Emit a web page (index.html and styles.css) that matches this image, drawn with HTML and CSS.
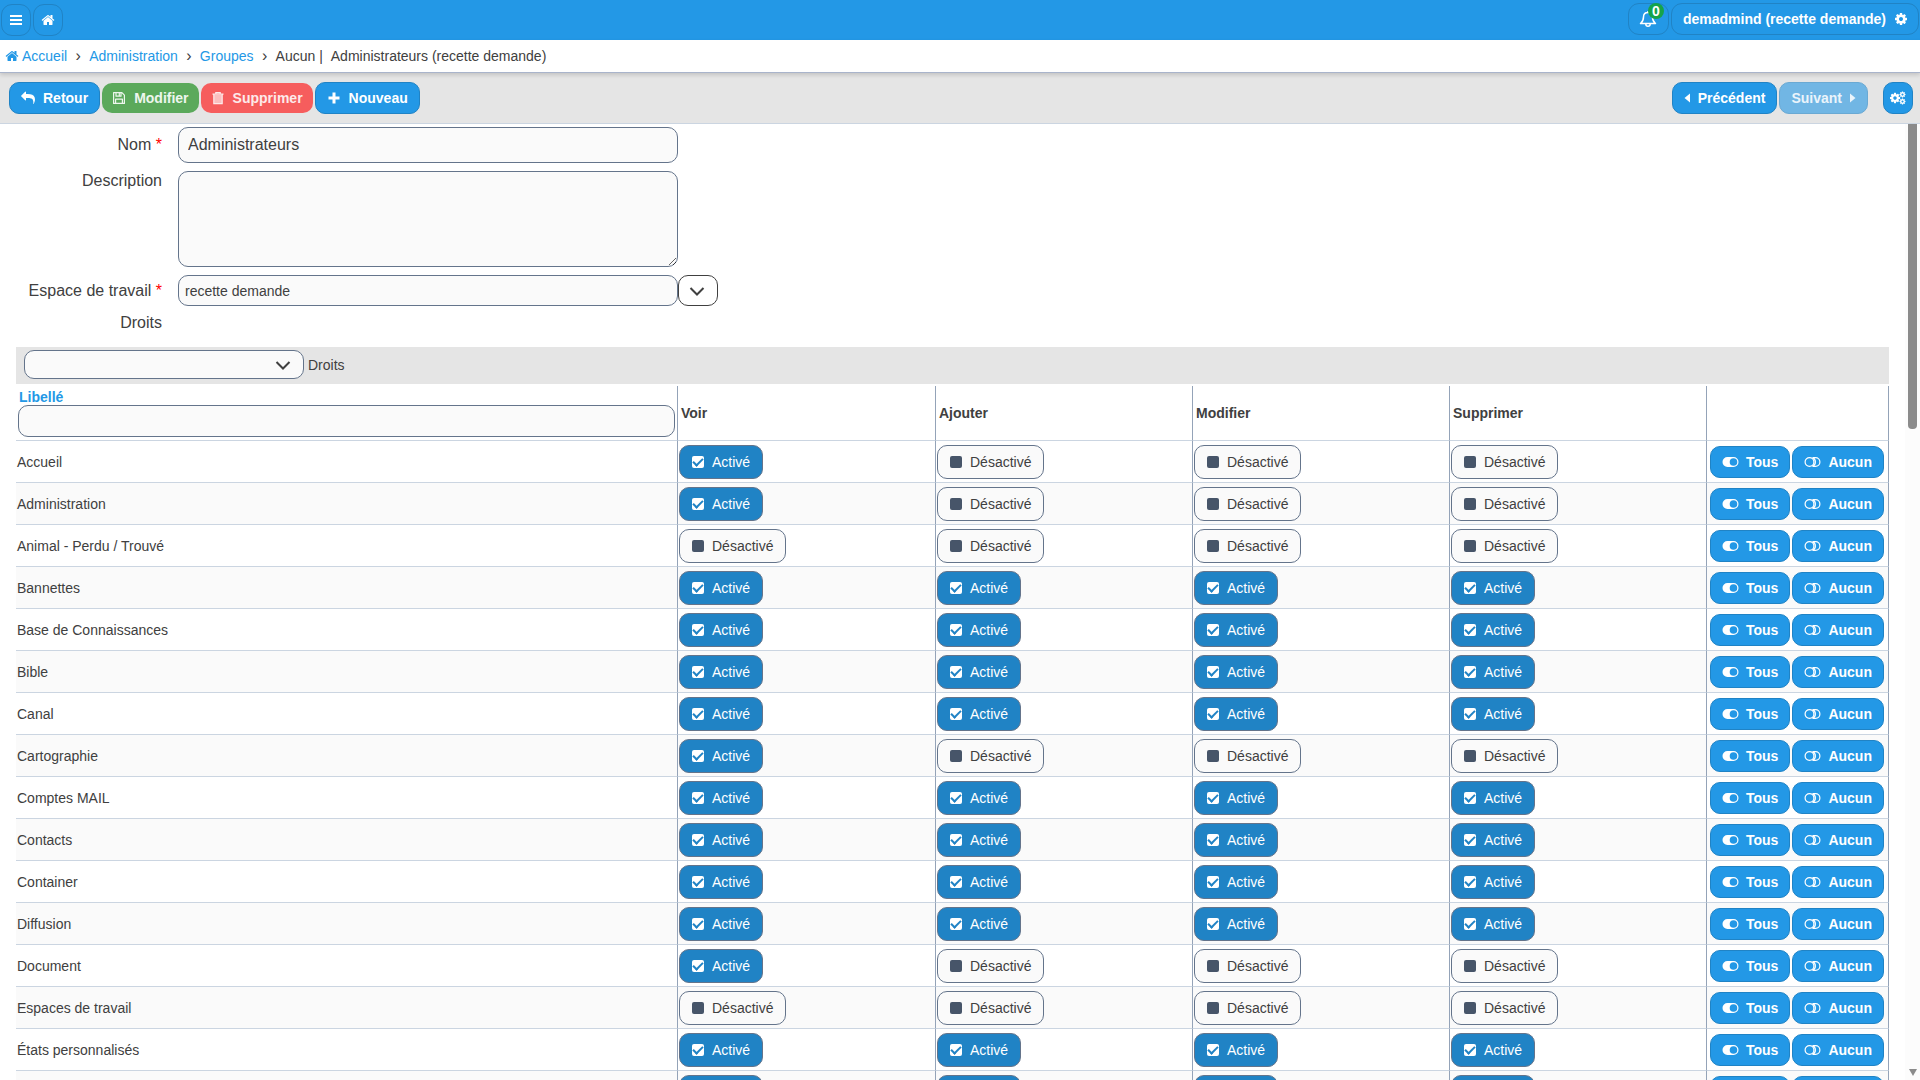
FILE: index.html
```html
<!DOCTYPE html>
<html lang="fr">
<head>
<meta charset="utf-8">
<title>Administrateurs (recette demande)</title>
<link rel="stylesheet" href="styles.css">
</head>
<body>
<svg class="sprite" aria-hidden="true">
  <symbol id="i-home" viewBox="0 0 1792 1792"><path d="M1472 992v480q0 26-19 45t-45 19h-384v-384h-256v384h-384q-26 0-45-19t-19-45v-480q0-1 .5-3t.5-3l575-474 575 474q1 2 1 6zm223-69l-62 74q-8 9-21 11h-3q-13 0-21-7l-692-577-692 577q-12 8-24 7-13-2-21-11l-62-74q-8-10-7-23.500t11-21.500l719-599q32-26 76-26t76 26l244 204v-195q0-14 9-23t23-9h192q14 0 23 9t9 23v408l219 182q10 8 11 21.500t-7 23.500z"/></symbol>
  <symbol id="i-bars" viewBox="0 0 14 14"><path d="M1 2h12v2H1zM1 6h12v2H1zM1 10h12v2H1z"/></symbol>
  <symbol id="i-reply" viewBox="0 0 1792 1792"><path transform="matrix(-1 0 0 1 1792 0)" d="M1792 640q0 26-19 45l-512 512q-19 19-45 19t-45-19-19-45v-256h-224q-98 0-175.500 6t-154 21.500-133 42.500-105.500 69.500-80 101-48.500 138.500-17.500 181q0 55 5 123 0 6 2.500 23.500t2.500 26.500q0 15-8.500 25t-23.500 10q-16 0-28-17-7-9-13-22t-13.500-30-10.500-24q-127-285-127-451 0-199 53-333 162-403 875-403h224v-256q0-26 19-45t45-19 45 19l512 512q19 19 19 45z"/></symbol>
  <symbol id="i-save" viewBox="0 0 14 14"><path fill="none" stroke="currentColor" stroke-width="1.200" stroke-linejoin="round" d="M1.600 1.600h8.300l2.500 2.500v8.300H1.600zM4 1.600v3.600h5V1.600M3.600 12.400V8.200h6.800v4.200M7.300 2v2.600"/></symbol>
  <symbol id="i-trash" viewBox="0 0 14 14"><path d="M3 4h8v8.500H3z" opacity=".7"/><path fill="none" stroke="currentColor" stroke-width="1.200" d="M1.500 3.200h11M4.800 3V1.600h4.400V3M2.800 3.600v9h8.400v-9"/></symbol>
  <symbol id="i-plus" viewBox="0 0 14 14"><path d="M5.500 1.500h3v4h4v3h-4v4h-3v-4h-4v-3h4z"/></symbol>
  <symbol id="i-cog" viewBox="0 0 1792 1792"><path d="M1152 896q0-106-75-181t-181-75-181 75-75 181 75 181 181 75 181-75 75-181zm512-109v222q0 12-8 23t-20 13l-185 28q-19 54-39 91 35 50 107 138 10 12 10 25t-9 23q-27 37-99 108t-94 71q-12 0-26-9l-138-108q-44 23-91 38-16 136-29 186-7 28-36 28h-222q-14 0-24.500-8.500t-11.500-21.500l-28-184q-49-16-90-37l-141 107q-10 9-25 9-14 0-25-11-126-114-165-168-7-10-7-23 0-12 8-23 15-21 51-66.500t54-70.500q-27-50-41-99l-183-27q-13-2-21-12.500t-8-23.500v-222q0-12 8-23t19-13l186-28q14-46 39-92-40-57-107-138-10-12-10-24 0-10 9-23 26-36 98.500-107.500t94.500-71.500q13 0 26 10l138 107q44-23 91-38 16-136 29-186 7-28 36-28h222q14 0 24.500 8.500t11.500 21.500l28 184q49 16 90 37l142-107q9-9 24-9 13 0 25 10 129 119 165 170 7 8 7 22 0 12-8 23-15 21-51 66.500t-54 70.500q26 50 41 98l183 28q13 2 21 12.500t8 23.500z"/></symbol>
  <symbol id="i-cogs" viewBox="0 0 16 14"><use href="#i-cog" x="-1" y="1" width="12" height="12"/><use href="#i-cog" x="9" y="0" width="7" height="7"/><use href="#i-cog" x="9" y="7" width="7" height="7"/></symbol>
  <symbol id="i-bell" viewBox="0 0 18 18"><path fill="none" stroke="currentColor" stroke-width="1.500" stroke-linejoin="round" d="M9 2.500c-3 0-4.500 2-4.500 4.500 0 3.500-1 5-3 6.500h15c-2-1.500-3-3-3-6.500 0-2.500-1.500-4.500-4.500-4.500zM6.800 14c0 1.500 1 2.300 2.200 2.300s2.200-.8 2.200-2.300M9 1v1.500"/></symbol>
  <symbol id="i-left" viewBox="0 0 6 10"><path d="M6 .5v9L.5 5z"/></symbol>
  <symbol id="i-right" viewBox="0 0 6 10"><path d="M0 .5v9L5.500 5z"/></symbol>
  <symbol id="i-chevron" viewBox="0 0 16 16"><path fill="none" stroke="currentColor" stroke-width="2" d="M1.500 5L8 11.500 14.500 5"/></symbol>
  <symbol id="i-on" viewBox="0 0 17 12"><path fill-rule="evenodd" d="M5.500 1h6a5 5 0 0 1 0 10h-6a5 5 0 0 1 0-10zm6 1.200a3.800 3.800 0 1 0 0 7.600 3.800 3.800 0 0 0 0-7.600z"/></symbol>
  <symbol id="i-off" viewBox="0 0 17 12"><g fill="none" stroke="currentColor" stroke-width="1.200"><circle cx="5.500" cy="6" r="4.400"/><path d="M8.500 1.600h3a4.400 4.400 0 0 1 0 8.800h-3a4.800 4.800 0 0 0 0-8.800z"/></g></symbol>
</svg>

<header class="topbar">
  <button class="ghost ghost-icon" type="button" aria-label="Menu"><svg class="icon"><use href="#i-bars"/></svg></button>
  <button class="ghost ghost-icon" type="button" aria-label="Accueil"><svg class="icon"><use href="#i-home"/></svg></button>
  <div class="account">
    <button class="ghost bell" type="button" aria-label="Notifications"><svg class="icon-bell"><use href="#i-bell"/></svg><span class="badge">0</span></button>
    <button class="ghost user" type="button">demadmind (recette demande)<svg class="icon"><use href="#i-cog"/></svg></button>
  </div>
</header>

<nav class="breadcrumb" aria-label="Fil d'Ariane">
  <a href="#"><svg class="icon"><use href="#i-home"/></svg>Accueil</a><span class="sep">›</span>
  <a href="#">Administration</a><span class="sep">›</span>
  <a href="#">Groupes</a><span class="sep">›</span>
  <span>Aucun |</span><span class="current">Administrateurs (recette demande)</span>
</nav>

<div class="toolbar">
  <button class="btn" type="button"><svg class="icon"><use href="#i-reply"/></svg>Retour</button>
  <button class="btn btn-green" type="button"><svg class="icon"><use href="#i-save"/></svg>Modifier</button>
  <button class="btn btn-red" type="button"><svg class="icon"><use href="#i-trash"/></svg>Supprimer</button>
  <button class="btn" type="button"><svg class="icon"><use href="#i-plus"/></svg>Nouveau</button>
  <button class="btn btn-prev" type="button"><svg class="icon-caret"><use href="#i-left"/></svg>Précédent</button>
  <button class="btn btn-next" type="button" disabled>Suivant<svg class="icon-caret"><use href="#i-right"/></svg></button>
  <button class="btn btn-square" type="button" aria-label="Options"><svg class="icon-cogs"><use href="#i-cogs"/></svg></button>
</div>

<div class="viewport">
  <main class="content">
    <form class="form">
      <label class="label-large" for="nom">Nom <span class="required">*</span></label>
      <input class="field field-large" id="nom" type="text" value="Administrateurs">
      <label class="label-top" for="description">Description</label>
      <textarea class="field area" id="description"></textarea>
      <label for="espace">Espace de travail <span class="required">*</span></label>
      <div class="combo">
        <input class="field" id="espace" type="text" value="recette demande">
        <button class="combo-button" type="button" aria-label="Choisir un espace"><svg class="icon-chevron"><use href="#i-chevron"/></svg></button>
      </div>
      <span class="form-label">Droits</span>
    </form>

    <section class="rights">
      <div class="rights-bar">
        <span class="select-wrap">
          <select class="field select" id="droits"><option></option></select>
          <svg class="icon-chevron"><use href="#i-chevron"/></svg>
        </span>
        <label for="droits">Droits</label>
      </div>
      <table class="grid">
        <colgroup><col><col class="col-first"><col class="col-right"><col class="col-right"><col class="col-right"><col class="col-actions"></colgroup>
        <thead>
          <tr>
            <th class="head-name"><label for="filtre"><a href="#">Libellé</a></label><input class="field filter" id="filtre" type="text"></th>
            <th>Voir</th><th>Ajouter</th><th>Modifier</th><th>Supprimer</th><th></th>
          </tr>
        </thead>
        <tbody id="rows"></tbody>
      </table>
    </section>
  </main>
  <div class="scrollbar" aria-hidden="true"><div class="thumb"></div><div class="arrow"></div></div>
</div>
<script src="app.js"></script>
</body>
</html>
```

FILE: styles.css
```css
* { box-sizing: border-box; }

body {
  margin: 0;
  height: 100vh;
  display: flex;
  flex-direction: column;
  overflow: hidden;
  background: #fff;
  color: #404040;
  font: 14px/20px "Liberation Sans", Arial, sans-serif;
}

button, input, select, textarea { font: inherit; color: inherit; margin: 0; }
a { color: #2398e6; text-decoration: none; }
svg { fill: currentColor; flex: none; }
.sprite { display: none; }
.icon { width: 14px; height: 14px; }

.topbar {
  flex: none;
  display: flex;
  align-items: center;
  gap: 2px;
  height: 40px;
  padding: 0 1px;
  background: #2398e6;
  color: #fff;
}
.ghost {
  display: flex;
  align-items: center;
  justify-content: center;
  gap: 8px;
  height: 32px;
  padding: 0 8px;
  background: transparent;
  border: 1px solid #2083c5;
  border-radius: 11px;
  color: #fff;
  font-weight: bold;
}
.ghost-icon { width: 30px; }
.account {
  display: flex;
  gap: 2px;
  margin-left: auto;
  padding-bottom: 2px;
}
.bell { position: relative; width: 41px; }
.icon-bell { width: 18px; height: 18px; }
.badge {
  position: absolute;
  top: -1px;
  right: 4px;
  width: 16px;
  height: 16px;
  border-radius: 8px;
  background: #16a34a;
  line-height: 16px;
  text-align: center;
}
.user { padding: 0 10px 0 11px; }

.breadcrumb {
  flex: none;
  position: relative;
  display: flex;
  align-items: center;
  height: 33px;
  padding-left: 5px;
  background: #fff;
  border-bottom: 1px solid #a9b4cb;
  box-shadow: 0 2px 4px rgba(0, 0, 0, 0.15);
}
.breadcrumb a { display: flex; align-items: center; gap: 3px; }
.sep { width: 22px; font-size: 16px; text-align: center; }
.current { margin-left: 8px; }

.toolbar {
  flex: none;
  display: flex;
  align-items: center;
  gap: 2px;
  height: 51px;
  padding: 0 7px 0 9px;
  background: #e5e5e5;
  border-bottom: 1px solid #cbd5e1;
}
.btn {
  display: inline-flex;
  align-items: center;
  justify-content: center;
  gap: 8px;
  height: 32px;
  padding: 0 11px;
  background: #2398e6;
  border: 1px solid #2083c5;
  border-radius: 10px;
  color: #fff;
  font-weight: bold;
}
.btn-green, .btn-red { height: 30px; padding: 0 10px; border: 0; }
.btn-green { background: #5ba95b; color: #eef6ee; }
.btn-red { background: #f65d5d; color: #fdeaea; }
.btn-prev { margin-left: auto; }
.btn-next { background: #71b6e4; border-color: #6aa9d3; color: #eaf4fb; }
.btn-square { width: 30px; padding: 0; margin-left: 13px; }
.icon-caret { width: 6px; height: 10px; }
.icon-cogs { width: 16px; height: 14px; }

.viewport { flex: 1; min-height: 0; display: flex; }
.content {
  flex: 1;
  min-width: 0;
  overflow-y: auto;
  scrollbar-width: none;
  padding: 3px 16px 0;
}

.form {
  display: grid;
  grid-template-columns: 146px minmax(0, 540px);
  column-gap: 16px;
  row-gap: 8px;
  font-size: 16px;
}
.form > label, .form-label { text-align: right; line-height: 32px; }
.form > .label-large { line-height: 36px; }
.form > .label-top { line-height: 20px; }
.form-label { margin-top: -8px; }
.required { color: #f00; }
.field {
  width: 500px;
  height: 32px;
  padding: 0 6px;
  background: #fafafa;
  border: 1px solid #64748b;
  border-radius: 10px;
  font-size: 14px;
}
.field-large { height: 36px; padding: 0 9px; font-size: 16px; }
.area { display: block; height: 96px; }
.combo { display: flex; height: 31px; }
.combo .field { height: auto; }
.combo-button {
  display: flex;
  align-items: center;
  justify-content: center;
  width: 40px;
  padding: 0 2px 0 0;
  background: #fff;
  border: 1px solid #404040;
  border-radius: 10px;
}
.icon-chevron { width: 16px; height: 16px; }

.rights { margin-top: 8px; }
.rights-bar {
  display: flex;
  align-items: center;
  gap: 4px;
  height: 37px;
  padding: 0 0 2px 8px;
  background: #e5e5e5;
}
.select-wrap { display: grid; align-items: center; }
.select-wrap > * { grid-area: 1 / 1; }
.select-wrap .icon-chevron { justify-self: end; margin-right: 13px; pointer-events: none; }
.select { appearance: none; width: 280px; height: 29px; }

.grid {
  width: 100%;
  margin-top: 2px;
  table-layout: fixed;
  border-collapse: separate;
  border-spacing: 0;
}
.col-first { width: 258px; }
.col-right { width: 257px; }
.col-actions { width: 182px; }
.grid th, .grid td {
  padding: 0 2px 0 1px;
  border-right: 1px solid #94a3b8;
  border-bottom: 1px solid #cbd5e1;
  text-align: left;
}
.grid th { height: 55px; padding: 0 3px; }
.grid td { height: 42px; }
.grid tbody th {
  height: 42px;
  padding: 0 1px;
  font-weight: normal;
}
.grid .head-name { padding: 0 2px; line-height: 16px; vertical-align: top; }
.head-name label { display: block; padding: 3px 1px 0; }
.filter { display: block; width: 100%; }
.grid tbody tr:nth-child(even) { background: #fafafa; }
.grid .actions { padding: 0 3px; }
.action-group { display: flex; gap: 2px; }
.action-group .btn { gap: 7px; }
.icon-toggle { width: 17px; height: 12px; }

.toggle {
  display: inline-flex;
  align-items: center;
  gap: 8px;
  height: 34px;
  padding: 0 12px;
  background: #fafafa;
  border: 1px solid #64748b;
  border-radius: 10px;
  vertical-align: middle;
}
.toggle input {
  appearance: none;
  display: grid;
  place-items: center;
  width: 12px;
  height: 12px;
  border-radius: 2px;
  background: #475569;
}
.toggle:has(:checked) { background: #2083c5; color: #fff; }
.toggle input:checked { background: #fff; }
.toggle input:checked::before {
  content: "";
  width: 8px;
  height: 4px;
  margin-bottom: 2px;
  border: solid #2083c5;
  border-width: 0 0 2px 2px;
  transform: rotate(-45deg);
}

.scrollbar {
  flex: none;
  display: flex;
  flex-direction: column;
  align-items: center;
  justify-content: space-between;
  width: 15px;
  padding-bottom: 4px;
  background: #fcfcfc;
}
.thumb { width: 9px; height: 32%; border-radius: 0 0 4px 4px; background: #8b8b8b; }
.arrow {
  border: solid transparent;
  border-width: 7px 4px 0;
  border-top-color: #8b8b8b;
}
```

FILE: app.js
```js
// Each entry: label, then the rights Voir / Ajouter / Modifier / Supprimer (1 = activé).
const groups = [
  ["Accueil", "1000"],
  ["Administration", "1000"],
  ["Animal - Perdu / Trouvé", "0000"],
  ["Bannettes", "1111"],
  ["Base de Connaissances", "1111"],
  ["Bible", "1111"],
  ["Canal", "1111"],
  ["Cartographie", "1000"],
  ["Comptes MAIL", "1111"],
  ["Contacts", "1111"],
  ["Container", "1111"],
  ["Diffusion", "1111"],
  ["Document", "1000"],
  ["Espaces de travail", "0000"],
  ["États personnalisés", "1111"],
  ["", "1111"]
];

const toggle = (on) =>
  `<td><label class="toggle"><input type="checkbox"${on === "1" ? " checked" : ""}>` +
  `<span>${on === "1" ? "Activé" : "Désactivé"}</span></label></td>`;

const action = (icon, text) =>
  `<button class="btn" type="button"><svg class="icon-toggle"><use href="#${icon}"/></svg>${text}</button>`;

document.getElementById("rows").innerHTML = groups
  .map(([name, rights]) =>
    `<tr><th scope="row">${name}</th>${[...rights].map(toggle).join("")}` +
    `<td class="actions"><div class="action-group">${action("i-on", "Tous")}${action("i-off", "Aucun")}</div></td></tr>`)
  .join("");

document.getElementById("rows").addEventListener("change", (event) => {
  event.target.nextElementSibling.textContent = event.target.checked ? "Activé" : "Désactivé";
});
```
